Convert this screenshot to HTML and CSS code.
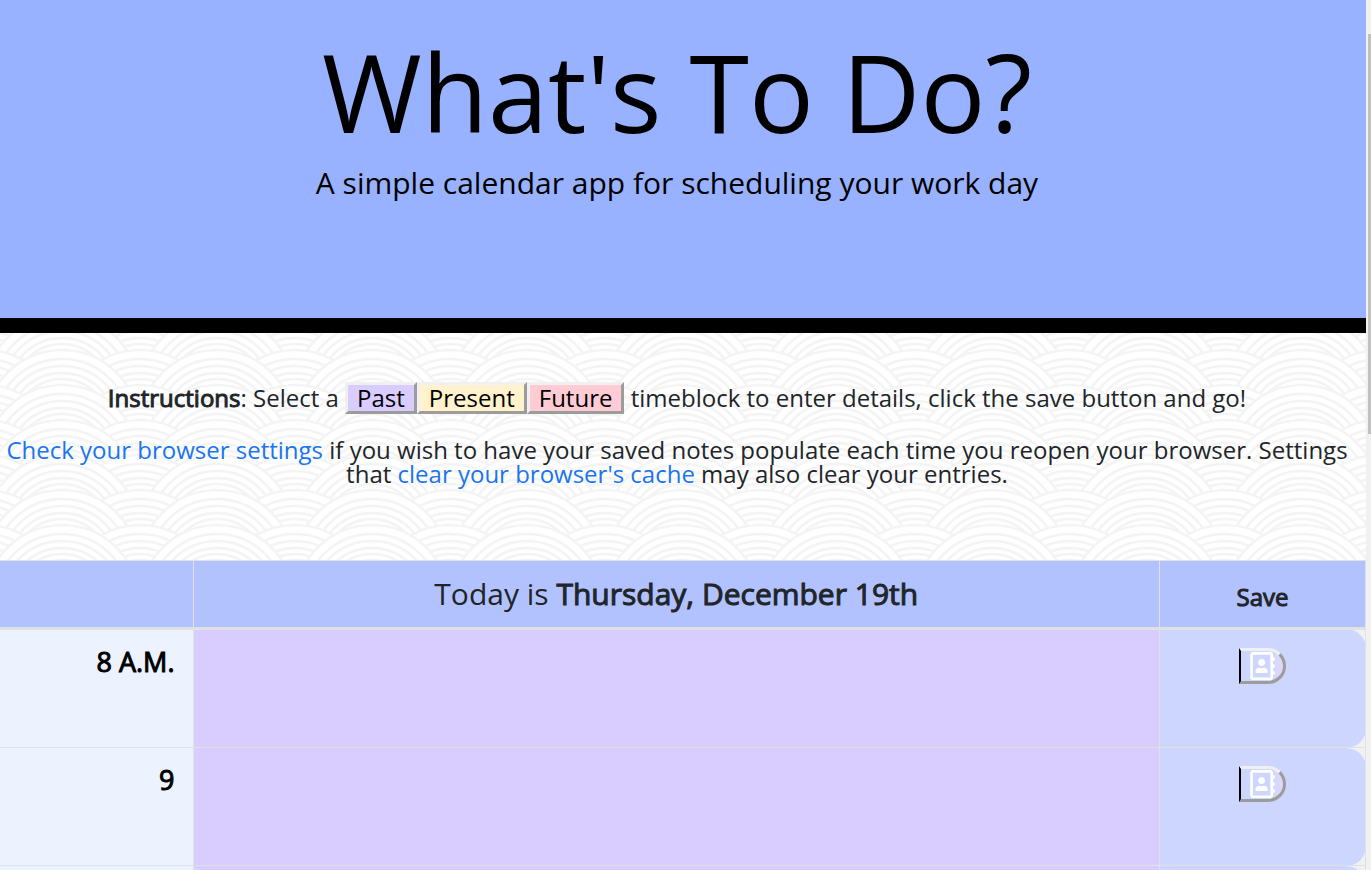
FILE: index.html
```
<!DOCTYPE html>
<html lang="en">
<head>
<meta charset="utf-8">
<title>What's To Do?</title>
<link rel="stylesheet" href="styles.css">
</head>
<body>
<svg class="sprite" aria-hidden="true">
  <symbol id="address-book" viewBox="0 0 448 512"><path d="M436 160c6.600 0 12-5.400 12-12v-40c0-6.600-5.400-12-12-12h-20V48c0-26.500-21.500-48-48-48H48C21.500 0 0 21.500 0 48v416c0 26.500 21.500 48 48 48h320c26.500 0 48-21.500 48-48v-48h20c6.600 0 12-5.400 12-12v-40c0-6.600-5.400-12-12-12h-20v-64h20c6.600 0 12-5.400 12-12v-40c0-6.600-5.400-12-12-12h-20v-64h20zm-68 304H48V48h320v416zM208 256c35.300 0 64-28.700 64-64s-28.700-64-64-64-64 28.700-64 64 28.700 64 64 64zm-89.600 128h179.200c12.400 0 22.400-8.600 22.400-19.200v-19.200c0-31.800-30.100-57.600-67.200-57.600-10.800 0-18.700 8-44.800 8-26.900 0-33.400-8-44.800-8-37.100 0-67.200 25.800-67.200 57.600v19.200c0 10.600 10 19.200 22.400 19.200z"/></symbol>
</svg>
<div class="shell">
  <div class="page">
    <header class="banner">
      <h1 class="title">What's To Do?</h1>
      <p class="lead">A simple calendar app for scheduling your work day</p>
    </header>
    <section class="intro">
      <p><strong>Instructions</strong>: Select a <button class="tag past" type="button">Past</button><button class="tag present" type="button">Present</button><button class="tag future" type="button">Future</button> timeblock to enter details, click the save button and go!</p>
      <p><a href="#settings">Check your browser settings</a> if you wish to have your saved notes populate each time you reopen your browser. Settings that <a href="#cache">clear your browser's cache</a> may also clear your entries.</p>
    </section>
    <table class="planner">
      <thead>
        <tr>
          <th class="hour-col"></th>
          <th class="today">Today is <strong>Thursday, December 19th</strong></th>
          <th class="save-col"><strong>Save</strong></th>
        </tr>
      </thead>
      <tbody>
        <tr>
          <th class="hour" scope="row"><label for="note-8">8 A.M.</label></th>
          <td class="slot past"><textarea id="note-8"></textarea></td>
          <td class="save"><button class="save-btn" type="button" aria-label="Save 8 A.M."><svg class="icon"><use href="#address-book"/></svg></button></td>
        </tr>
        <tr>
          <th class="hour" scope="row"><label for="note-9">9</label></th>
          <td class="slot past"><textarea id="note-9"></textarea></td>
          <td class="save"><button class="save-btn" type="button" aria-label="Save 9"><svg class="icon"><use href="#address-book"/></svg></button></td>
        </tr>
        <tr>
          <th class="hour" scope="row"></th>
          <td class="slot past"><textarea aria-label="Notes"></textarea></td>
          <td class="save"><button class="save-btn" type="button" aria-label="Save"><svg class="icon"><use href="#address-book"/></svg></button></td>
        </tr>
      </tbody>
    </table>
  </div>
  <div class="scroll-track"><div class="scroll-thumb"></div></div>
</div>
</body>
</html>
```
FILE: styles.css
```
* { box-sizing: border-box; }

body {
  margin: 0;
  font-family: "Open Sans", sans-serif;
  font-size: 24px;
  line-height: 24px;
  color: #212529;
}

.sprite { display: none; }

.shell {
  display: flex;
  height: 100vh;
  overflow: hidden;
  background: #f1f1f1;
}

.page { flex: 1; }

strong,
.hour {
  font-weight: 400;
  -webkit-text-stroke: 1px currentColor;
}

.banner {
  padding: 27px 12px 117px 0;
  border-bottom: 15px solid #000;
  background: #99b2ff;
  color: #000;
  text-align: center;
}

.title {
  margin: 0 0 8px;
  font-size: 108px;
  font-weight: 400;
  line-height: 130px;
}

.lead {
  margin: 0;
  font-size: 30px;
  line-height: 36px;
}

.intro {
  padding: 49px 12px 50px 0;
  text-align: center;
  background: #fff url("data:image/svg+xml,%3Csvg xmlns='http://www.w3.org/2000/svg' xmlns:xlink='http://www.w3.org/1999/xlink' width='155' height='35'%3E%3Cdefs%3E%3Cg id='c' fill='%23fff' stroke='%23f4f4f4' stroke-width='2.500'%3E%3Ccircle r='77'/%3E%3Ccircle r='68'/%3E%3Ccircle r='61'/%3E%3Ccircle r='54'/%3E%3Ccircle r='48'/%3E%3Ccircle r='42'/%3E%3Ccircle r='36'/%3E%3C/g%3E%3Cg id='r'%3E%3Cuse xlink:href='%23c' x='-15'/%3E%3Cuse xlink:href='%23c' x='140'/%3E%3Cuse xlink:href='%23c' x='-93'/%3E%3Cuse xlink:href='%23c' x='62'/%3E%3Cuse xlink:href='%23c' x='217'/%3E%3C/g%3E%3C/defs%3E%3Cuse xlink:href='%23r' y='-28'/%3E%3Cuse xlink:href='%23r' y='7'/%3E%3Cuse xlink:href='%23r' y='42'/%3E%3Cuse xlink:href='%23r' y='77'/%3E%3C/svg%3E") 0 17px;
}

.intro p { margin: 0 0 24px; }

a {
  color: #1a75f0;
  text-decoration: none;
}

.past { background: #d9ccff; }
.present { background: #fff2cc; }
.future { background: #ffccd6; }

.tag {
  padding: 0 9px;
  border: 3px outset #f0f0f0;
  font: inherit;
  line-height: 26px;
  color: #000;
}

.planner {
  width: 100%;
  table-layout: fixed;
  border-collapse: collapse;
  background: #f1f1f1;
}

.planner th,
.planner td {
  border: 1px solid #dee2e6;
  vertical-align: top;
}

.planner thead th {
  height: 68px;
  padding: 0;
  border-bottom: 3px solid #dee2e6;
  background: #b2c2ff;
  font-weight: 400;
  vertical-align: middle;
}

.planner th:first-child { border-left: 0; }
.planner .hour-col { width: 193px; }
.planner thead .save-col { width: 206px; padding-top: 6px; }
.planner .today { font-size: 30px; line-height: 36px; }

.planner .hour {
  padding: 14px 18px 0;
  background: #edf2ff;
  color: #000;
  font-size: 27px;
  line-height: 36px;
  text-align: right;
}

.planner .slot { padding: 0; }

textarea {
  display: block;
  width: 100%;
  height: 117px;
  padding: 12px;
  border: 0;
  background: transparent;
  font: inherit;
  resize: none;
}

.planner .save {
  padding: 18px 0 0;
  border-radius: 0 20px 20px 0;
  background: #ccd6ff;
  text-align: center;
}

.save-btn {
  display: inline-flex;
  justify-content: center;
  align-items: center;
  width: 47px;
  height: 36px;
  padding: 0;
  border: 3px outset #f0f0f0;
  border-left: 2px solid #000;
  border-radius: 0 18px 18px 0;
  background: linear-gradient(90deg, #ccd6ff 60%, #dcd9fb);
}

.icon {
  width: 25px;
  height: 28px;
  fill: #fff;
}

.scroll-track {
  width: 5px;
  padding: 34px 0 0 2px;
  background: #f1f1f1;
}

.scroll-thumb {
  height: 400px;
  background: #c1c1c1;
}
```
